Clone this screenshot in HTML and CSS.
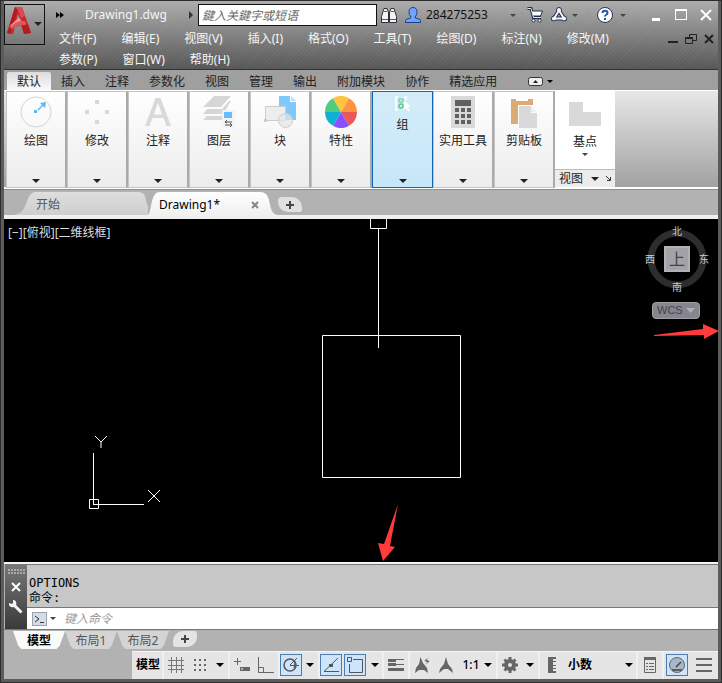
FILE: index.html
```html
<!DOCTYPE html>
<html lang="zh-CN">
<head>
    <meta charset="UTF-8">
    <meta name="viewport" content="width=device-width, initial-scale=1.0">
    <title>Drawing1.dwg</title>
    <link rel="stylesheet" href="styles.css">
</head>
<body>
    <!-- Title bar and menus -->
    <header class="header">
        <button class="logo" aria-label="应用程序菜单">
            <svg width="24" height="28" viewBox="0 0 24 28">
                <path fill-rule="evenodd" d="M8 0h7l9 26-7 1-3-9-6 2-2 7-6-1zM9 15l4-2-2-6z" fill="#c9252c"/>
                <path d="M8 0h3L6 19l-3 8-3-1z" fill="#b3191f"/>
                <path d="M8 0h7l3 9-4 2-3-8z" fill="#e04a4e"/>
                <path d="M3 18c5-4 9-5 15-4l2 5c-6-2-11-1-15 4z" fill="#e0575a"/>
                <path d="M0 26c3-7 8-11 14-12l-1-3C8 13 4 17 0 26z" fill="#f29a98"/>
                <path d="m17 27 7-1-3-9-6 2z" fill="#b41c22"/>
            </svg>
            <span class="caret"></span>
        </button>
        <div class="header-main">
            <div class="title-bar">
                <button class="more" aria-label="更多">
                    <svg width="8" height="6" viewBox="0 0 8 6"><path d="M0 0l4 3-4 3zM4 0l4 3-4 3z"/></svg>
                </button>
                <h1 class="doc-title">Drawing1.dwg</h1>
                <svg class="title-arrow" width="4" height="8" viewBox="0 0 4 8"><path d="M0 0l4 4-4 4z" fill="#333"/></svg>
                <input class="search" type="text" placeholder="鍵入关鍵字或短语" aria-label="搜索">
                <div class="account">
                    <button aria-label="查找">
                        <svg width="16" height="16" viewBox="0 0 16 16">
                            <path d="M3 1.500h3l1.500 4v10h-7v-6zM10 1.500h3l2.500 8v6h-7v-10z" fill="#f4f4f4" stroke="#2b2f36"/>
                            <path d="M7 5h2v4H7z" fill="#2b2f36"/>
                            <path d="M1 12.500h6M9 12.500h6M3 4.500h3M10 4.500h3" stroke="#555b66"/>
                        </svg>
                    </button>
                    <button class="user">
                        <svg width="16" height="16" viewBox="0 0 16 16" fill="#6ea4ff" stroke="#1f3f7c">
                            <path d="M.5 15.500v-2c0-1.500 3-1.500 5-2.500l.5-1C4.500 8.500 4 6.500 4 4.500 4 2 5.500.5 8 .5s4 1.500 4 4c0 2-.5 4-2 5.500l.5 1c2 1 5 1 5 2.500v2z"/>
                        </svg>
                        <span>284275253</span>
                    </button>
                    <span class="caret small"></span>
                </div>
                <div class="services">
                    <button aria-label="商店">
                        <svg width="16" height="16" viewBox="0 0 16 16">
                            <path d="M.5 1.500H4L6.500 10.500H14" fill="none" stroke="#23304c" stroke-width="3"/>
                            <path d="M4 4h11.500L13.500 9H6z" fill="#fff" stroke="#23304c"/>
                            <path d="M.5 1.500H4L6.500 10.500H14" fill="none" stroke="#dfe6f3"/>
                            <circle cx="6.500" cy="13.500" r="1.500" fill="#fff" stroke="#23304c"/>
                            <circle cx="12.500" cy="13.500" r="1.500" fill="#fff" stroke="#23304c"/>
                        </svg>
                    </button>
                    <button class="drop" aria-label="应用">
                        <svg width="16" height="16" viewBox="0 0 16 16">
                            <path d="M8 3.500 3 11.500h10z" fill="none" stroke="#23304c" stroke-width="4"/>
                            <g fill="#f2f5fa" stroke="#23304c">
                                <circle cx="8" cy="3" r="2.500"/>
                                <circle cx="3" cy="11.500" r="2.500"/>
                                <circle cx="13" cy="11.500" r="2.500"/>
                            </g>
                            <path d="M8 3.500 3 11.500h10z" fill="none" stroke="#f2f5fa" stroke-width="2"/>
                        </svg>
                        <span class="caret small"></span>
                    </button>
                    <button class="help drop" aria-label="帮助">
                        <svg width="16" height="16" viewBox="0 0 16 16">
                            <circle cx="8" cy="8" r="7.500" fill="#fff" stroke="#2c3444"/>
                            <path d="M5.500 6C5.500 3 10.500 3 10.500 6 10.500 8 8 7.500 8 9.500M8 11v2" fill="none" stroke="#1d56b5" stroke-width="2"/>
                        </svg>
                        <span class="caret small"></span>
                    </button>
                </div>
                <div class="window-buttons">
                    <button aria-label="最小化"><svg width="12" height="12"><path d="M2 10.500h8" stroke="#fff" stroke-width="3"/></svg></button>
                    <button aria-label="最大化"><svg width="12" height="12"><path d="M.5 0v11M11.500 0v11M0 10.500h12" stroke="#fff" fill="none"/><path d="M0 1h12" stroke="#fff" stroke-width="2"/></svg></button>
                    <button aria-label="关闭"><svg width="12" height="12"><path d="M1 1l10 10M11 1L1 11" stroke="#fff" stroke-width="2"/></svg></button>
                </div>
            </div>
            <div class="menu-row">
                <nav class="menu">
                    <a href="#">文件(F)</a>
                    <a href="#">编辑(E)</a>
                    <a href="#">视图(V)</a>
                    <a href="#">插入(I)</a>
                    <a href="#">格式(O)</a>
                    <a href="#">工具(T)</a>
                    <a href="#">绘图(D)</a>
                    <a href="#">标注(N)</a>
                    <a href="#">修改(M)</a>
                    <a href="#">参数(P)</a>
                    <a href="#">窗口(W)</a>
                    <a href="#">帮助(H)</a>
                </nav>
                <div class="mdi-buttons">
                    <button aria-label="最小化图形"><svg width="10" height="10"><path d="M0 8h10" stroke="#222" stroke-width="2"/></svg></button>
                    <button aria-label="还原图形"><svg width="12" height="10"><path d="M.5 3.500h7v6h-7zM4.500 3V.5h7v6H8M.5 4.500h7" stroke="#222" fill="none"/></svg></button>
                    <button aria-label="关闭图形"><svg width="10" height="10"><path d="M1 1l8 8M9 1L1 9" stroke="#222" stroke-width="2"/></svg></button>
                </div>
            </div>
        </div>
    </header>

    <!-- Ribbon -->
    <nav class="ribbon-tabs">
        <button class="active">默认</button>
        <button>插入</button>
        <button>注释</button>
        <button>参数化</button>
        <button>视图</button>
        <button>管理</button>
        <button>输出</button>
        <button>附加模块</button>
        <button>协作</button>
        <button>精选应用</button>
        <button class="ribbon-toggle" aria-label="最小化功能区">
            <svg width="15" height="9" viewBox="0 0 15 9"><rect x=".5" y=".5" width="14" height="8" rx="2" fill="#eee" stroke="#333"/><path d="M5 6h5L7.500 3z" fill="#222"/></svg>
            <span class="caret small"></span>
        </button>
    </nav>

    <section class="ribbon">
        <button class="panel">
            <svg width="32" height="32" viewBox="0 0 32 32">
                <circle cx="16" cy="16" r="15" fill="none" stroke="#d4d4d4"/>
                <path d="M18 14l5-5" stroke="#5bb8f5" stroke-width="1.500"/>
                <path d="M14 14h3v3h-3zM20 7l6-1-1 6z" fill="#5bb8f5"/>
            </svg>
            <span>绘图</span><span class="caret"></span>
        </button>
        <button class="panel">
            <svg width="32" height="32" viewBox="0 0 32 32"><path d="M14 4h4v4h-4zM4 14h4v4H4zM24 14h4v4h-4zM14 24h4v4h-4z" fill="#d9d9d9"/></svg>
            <span>修改</span><span class="caret"></span>
        </button>
        <button class="panel">
            <svg width="32" height="32" viewBox="0 0 32 32"><path fill-rule="evenodd" d="M3 30 13.500 2h5L29 30h-4.500l-3-8h-11l-3 8zM12 18.500h8L16 7z" fill="#d9d9d9"/></svg>
            <span>注释</span><span class="caret"></span>
        </button>
        <button class="panel">
            <svg width="32" height="32" viewBox="0 0 32 32">
                <path d="M11 0h17L18 11H0zM4 13h15l7-8h2l-8 13H0zM4 20h15v4H0z" fill="#d6d6d6"/>
                <path d="M19 14h13v18H19z" fill="#f3f3f3"/>
                <path d="M21 16h8v6h-8z" fill="#66bdfb"/>
                <path d="M22 26h7M22 29h7M24 24l-2 2 2 1M27 27l2 2-2 2" fill="none" stroke="#555"/>
            </svg>
            <span>图层</span><span class="caret"></span>
        </button>
        <button class="panel">
            <svg width="32" height="32" viewBox="0 0 32 32">
                <path d="M15 0h11v6h6v18H15z" fill="#81c8fb"/>
                <path d="M27 0l5 5h-5z" fill="#b5dffc"/>
                <path d="M1.500 10.500h20v14h-20z" fill="#ededed" stroke="#ccc"/>
                <circle cx="21.500" cy="24.500" r="7" fill="#e5e5e5" fill-opacity=".7" stroke="#ccc"/>
                <path d="M0 23h3v3H0z" fill="#ccc"/>
            </svg>
            <span>块</span><span class="caret"></span>
        </button>
        <button class="panel">
            <svg width="32" height="32" viewBox="0 0 32 32">
                <path d="M16 16 8 2.140A16 16 0 0 1 24 2.140z" fill="#ffc440"/>
                <path d="M16 16 24 2.140A16 16 0 0 1 32 16z" fill="#ff9440"/>
                <path d="M16 16H32A16 16 0 0 1 24 29.860z" fill="#e85858"/>
                <path d="M16 16 24 29.860A16 16 0 0 1 8 29.860z" fill="#8850ff"/>
                <path d="M16 16 8 29.860A16 16 0 0 1 0 16z" fill="#10b0d0"/>
                <path d="M16 16H0A16 16 0 0 1 8 2.140z" fill="#50cc80"/>
            </svg>
            <span>特性</span><span class="caret"></span>
        </button>
        <button class="panel selected">
            <svg width="16" height="16" viewBox="0 0 16 16">
                <path d="M3 1H1v13h2M9 1h2v3" fill="none" stroke="#fff" stroke-width="1.500"/>
                <path d="M4 3h4v3H4z" fill="none" stroke="#57cf87"/>
                <circle cx="6" cy="10" r="2" fill="none" stroke="#57cf87" stroke-width="1.500"/>
                <path d="M9 4l7 7h-3l2 4h-2l-2-3-2 2z" fill="#fff"/>
            </svg>
            <span>组</span><span class="caret"></span>
        </button>
        <button class="panel">
            <svg width="32" height="32" viewBox="0 0 32 32">
                <path d="M4 0h24v32H4z" fill="#d9d9d9"/>
                <path d="M8 4h16v6H8zM8 12h4v4H8zM14 12h4v4h-4zM20 12h4v4h-4zM8 18h4v4H8zM14 18h4v4h-4zM20 18h4v4h-4zM8 24h4v4H8zM14 24h4v4h-4zM20 24h4v4h-4z" fill="#606060"/>
            </svg>
            <span>实用工具</span><span class="caret"></span>
        </button>
        <button class="panel">
            <svg width="32" height="32" viewBox="0 0 32 32">
                <path d="M3 3h5v2h12V3h5v6H10v19H3z" fill="#d9ac77"/>
                <path d="M11 10h12v7h6v15H11z" fill="#d9d9d9"/>
                <path d="M23 10l6 6h-6z" fill="#efefef"/>
            </svg>
            <span>剪贴板</span><span class="caret"></span>
        </button>
        <div class="view-panel">
            <button class="base">
                <svg width="32" height="24" viewBox="0 0 32 24"><path d="M0 0h14v10h18v14H0z" fill="#d9d9d9"/></svg>
                <span>基点</span><span class="caret small"></span>
            </button>
            <button class="view-title">
                <span>视图</span><span class="caret"></span>
                <svg width="5" height="5" viewBox="0 0 5 5"><path d="M0 0l4 4M4.500 1v3.500H1" fill="none" stroke="#333"/></svg>
            </button>
        </div>
    </section>

    <!-- Drawing tabs -->
    <nav class="doc-tabs">
        <button class="doc-tab start">开始</button>
        <button class="doc-tab current">
            <span>Drawing1*</span>
            <svg width="8" height="8"><path d="M1 1l6 6M7 1L1 7" stroke="#888" stroke-width="2"/></svg>
        </button>
        <button class="new-tab" aria-label="新图形"><svg width="8" height="8"><path d="M4 0v8M0 4h8" stroke="#444" stroke-width="2"/></svg></button>
    </nav>

    <!-- Model space -->
    <main class="canvas">
        <div class="view-label">[−][俯视][二维线框]</div>

        <svg class="shapes" width="142" height="262" viewBox="0 0 142 262" fill="none" stroke="#fff">
            <path d="M48.500 0v9.500h16V0M56.500 10v119M.5 116.500h138v142H.5z"/>
        </svg>

        <svg class="ucs" width="76" height="76" viewBox="0 0 76 76" fill="none" stroke="#fff">
            <path d="M5.500 70V18M5 69.500h51M1.500 64.500h9v9h-9zM7 1l6 6 6-6M13 7v6M60 55l12 12M72 55L60 67"/>
        </svg>

        <div class="compass">
            <svg class="ring" width="60" height="60"><circle cx="30" cy="30" r="26" fill="none" stroke="#2d2d2d" stroke-width="7"/></svg>
            <span class="north">北</span>
            <span class="west">西</span>
            <button class="top-face">上</button>
            <span class="east">东</span>
            <span class="south">南</span>
        </div>
        <button class="wcs">WCS <svg width="9" height="5"><path d="M0 0h9L4.500 5z" fill="#aeb0bb"/></svg></button>

        <svg class="arrow-right" width="65" height="16"><path d="M0 12 49 6V1l16 7-15 8v-4L0 13z" fill="#ff3b3b"/></svg>
        <svg class="arrow-down" width="22" height="58"><path d="M20 0 6 40l-6-1 5 18 12-14-5-1z" fill="#ff3b3b"/></svg>
    </main>

    <!-- Command line -->
    <section class="command">
        <div class="command-grip">
            <svg width="17" height="5"><path d="M0 1h17M0 4h17" stroke="#aaa" stroke-width="2" stroke-dasharray="2 1"/></svg>
            <button aria-label="关闭命令行"><svg width="10" height="10"><path d="M1 1l8 8M9 1L1 9" stroke="#fff" stroke-width="2"/></svg></button>
            <button aria-label="自定义">
                <svg width="14" height="14" viewBox="0 0 14 14"><path d="M4.500 4.500l8 8" stroke="#f4f4f4" stroke-width="3"/><path d="M4 0v3L3 4 0 3c-.5 3 2 5 5 4l2-2C8 3 7 0 4 0z" fill="#f4f4f4"/></svg>
            </button>
        </div>
        <div class="command-body">
            <div class="command-log">
                <p>OPTIONS</p>
                <p>命令:</p>
            </div>
            <div class="command-line">
                <button class="prompt" aria-label="最近使用的命令">
                    <svg width="15" height="14" viewBox="0 0 15 14"><rect x=".5" y=".5" width="14" height="13" fill="#d6dce6" stroke="#9aa3b2"/><path d="M3 4l4 3-4 3M8 10.500h4" fill="none" stroke="#333"/></svg>
                    <span class="caret small"></span>
                </button>
                <input type="text" placeholder="键入命令" aria-label="命令">
            </div>
        </div>
    </section>

    <nav class="layout-tabs">
        <button class="active">模型</button>
        <button>布局1</button>
        <button>布局2</button>
        <button class="add-layout" aria-label="新建布局"><svg width="8" height="8"><path d="M4 0v8M0 4h8" stroke="#444" stroke-width="2"/></svg></button>
    </nav>

    <!-- Status bar -->
    <footer class="status">
        <div class="group">
            <button class="model">模型</button>
        </div>
        <div class="group">
            <button aria-label="栅格"><svg width="16" height="16"><path d="M3.500 0v16M8.500 0v16M13.500 0v16M0 3.500h16M0 8.500h16M0 12.500h16" stroke="#777"/></svg></button>
            <button aria-label="捕捉"><svg width="14" height="14"><path d="M1 2h12M1 7h12M1 12h12" stroke="#666" stroke-width="2" stroke-dasharray="2 3"/></svg></button>
            <button class="drop-caret" aria-label="捕捉设置"><span class="caret"></span></button>
        </div>
        <div class="group">
            <button aria-label="动态输入"><svg width="16" height="14"><path d="M3.500 0v7M0 3.500h7" stroke="#666"/><path d="M6 9h10v4H6z" fill="#666"/><path d="M8 10v2" stroke="#fff"/></svg></button>
            <button aria-label="正交"><svg width="16" height="16"><path d="M.5 0v15.500H16M.5 10.500h5v5" stroke="#666" fill="none"/></svg></button>
        </div>
        <div class="group">
            <button class="on" aria-label="极轴追踪"><svg width="16" height="16"><circle cx="7" cy="8" r="6" stroke="#555" fill="none" stroke-width="1.500"/><path d="M7 8.500h9M7 8l7-7M10 3c2 2 2 5 1 8" stroke="#555" fill="none"/></svg></button>
            <button class="drop-caret" aria-label="极轴设置"><span class="caret"></span></button>
        </div>
        <div class="group spaced">
            <button class="on" aria-label="对象捕捉追踪"><svg width="16" height="16"><path d="M15 1 1 14.500h15" stroke="#555" fill="none"/><path d="M6 7h4v3H6z" fill="#555"/></svg></button>
            <button class="on" aria-label="对象捕捉"><svg width="16" height="16"><path d="M6 2.500h9.500v13H2.500V7M.5.5h4v4h-4z" stroke="#555" fill="none"/></svg></button>
            <button class="drop-caret" aria-label="捕捉模式"><span class="caret"></span></button>
        </div>
        <div class="group">
            <button aria-label="线宽"><svg width="16" height="14"><path d="M0 1.500h16M8 6.500h8" stroke="#666"/><path d="M0 6.500h8M8 11.500h8" stroke="#666" stroke-width="3"/><path d="M0 2.500h8M0 11.500h8" stroke="#666" stroke-width="3"/></svg></button>
        </div>
        <div class="group">
            <button aria-label="注释可见性"><svg width="16" height="16"><path d="M6.500 0 9 6l4 5 1 5-4-3H5l-4 3 1-5 3-4z" fill="#666"/><path d="M15 0l-5 4 3 1-2 3 5-4-3-1z" fill="#555" stroke="#e5e5e5" stroke-width=".5"/></svg></button>
            <button aria-label="自动缩放"><svg width="14" height="16"><path d="M7 0l2 7 4 5 1 4-5-4H5l-5 4 1-4 4-5z" fill="#666"/></svg></button>
            <button class="scale"><span>1:1</span><span class="caret"></span></button>
        </div>
        <div class="group">
            <button aria-label="切换工作空间"><svg width="16" height="16" viewBox="0 0 16 16"><circle cx="8" cy="8" r="4" fill="none" stroke="#666" stroke-width="4"/><path d="M8 0v3M8 13v3M0 8h3M13 8h3M2.500 2.500l2 2M11.500 11.500l2 2M13.500 2.500l-2 2M2.500 13.500l2-2" stroke="#666" stroke-width="3"/></svg></button>
            <button class="drop-caret" aria-label="工作空间"><span class="caret"></span></button>
        </div>
        <div class="group units">
            <svg width="8" height="16"><path d="M0 0h8v2H5v2h3v1H5v3h3v1H5v2h3v1H5v2h3v2H0z" fill="#666"/></svg>
            <select aria-label="单位"><option>小数</option></select>
            <span class="caret"></span>
        </div>
        <div class="group">
            <button aria-label="快捷特性"><svg width="12" height="16"><path d="M.5.5h11v15H.5z" fill="none" stroke="#666"/><path d="M0 1.500h12" stroke="#666" stroke-width="3"/><path d="M2 6.500h2M5 6.500h5M2 9.500h2M5 9.500h5M2 12.500h2M5 12.500h5" stroke="#666"/></svg></button>
        </div>
        <div class="group end">
            <button class="on" aria-label="硬件加速"><svg width="16" height="16"><circle cx="8" cy="8" r="7.500" fill="#a5b7c8" stroke="#666"/><path d="M7 10l5-5M3 13h10" stroke="#444" stroke-width="1.500"/></svg></button>
            <button aria-label="自定义"><svg width="16" height="14"><path d="M0 1h16M0 7h16M0 13h16" stroke="#666" stroke-width="2"/></svg></button>
        </div>
    </footer>
</body>
</html>
```
FILE: styles.css
```css
* {
    margin: 0;
    padding: 0;
    box-sizing: border-box;
}

body {
    font-family: "Noto Sans", "Noto Sans CJK SC", sans-serif;
    font-size: 12px;
    line-height: 16px;
    color: #222;
    background: #b2b2b2;
    height: 100vh;
    display: flex;
    flex-direction: column;
    border: solid #5c5c5c;
    border-width: 0 4px 4px;
    outline: 1px solid #2c2c2c;
    outline-offset: -1px;
    overflow: hidden;
}

button,
input,
select {
    font: inherit;
    color: inherit;
    background: none;
    border: 0;
    white-space: nowrap;
}

a {
    color: inherit;
    text-decoration: none;
}

svg {
    display: block;
    flex: none;
}

.caret {
    flex: none;
    border: 4px solid transparent;
    border-top-color: #222;
    border-bottom: 0;
}

.caret.small {
    border-width: 3px 3px 0;
    border-top-color: #444;
}

/* Header */
.header {
    display: flex;
    flex: none;
    height: 70px;
    margin: 0 -4px;
    padding: 3px 4px 0;
    border-top: 1px solid #2c2c2c;
    border-bottom: 1px solid #333;
    background: repeating-linear-gradient(135deg, rgba(255, 255, 255, 0.04) 0 1px, transparent 1px 3px),
                linear-gradient(#acacac, #565656);
}

.logo {
    display: flex;
    align-items: flex-start;
    justify-content: center;
    gap: 3px;
    width: 41px;
    height: 41px;
    padding-top: 2px;
    border: 1px solid #111;
    background: linear-gradient(#aaa, #777);
}

.logo .caret {
    margin-top: 15px;
}

.header-main {
    flex: 1;
    padding-left: 11px;
}

.title-bar {
    display: flex;
    align-items: center;
    height: 22px;
}

.doc-title {
    width: 104px;
    margin-left: 21px;
    font: 12px/16px "Noto Sans", sans-serif;
    color: #f4f4f4;
}

.search {
    flex: 1;
    width: 100px;
    height: 22px;
    margin-left: 5px;
    padding: 0 3px;
    border: 1px solid #111;
    background: #fff;
    font-style: italic;
}

.search::placeholder {
    color: #666;
}

.account,
.services,
.user,
.drop {
    display: flex;
    align-items: center;
}

.account {
    gap: 8px;
    margin-left: 4px;
    width: 146px;
}

.account .caret {
    margin-left: 14px;
}

.user {
    gap: 5px;
    font-size: 12px;
    color: #111;
}

.services {
    gap: 8px;
}

.drop {
    gap: 5px;
}

.help {
    margin-left: 1px;
    padding-left: 9px;
    border-left: 1px solid #999;
}

.help svg {
    margin-right: 2px;
}

.window-buttons,
.mdi-buttons {
    display: flex;
    align-items: center;
}

.window-buttons {
    gap: 13px;
    margin: 0 6px 0 24px;
}

.menu-row {
    display: flex;
    align-items: flex-start;
    justify-content: space-between;
    padding: 5px 4px 0 3px;
}

.menu {
    display: flex;
    flex-wrap: wrap;
    gap: 5px 25px;
    max-width: 580px;
    color: #f6f6f6;
}

.mdi-buttons {
    gap: 7px;
    padding-top: 3px;
}

/* Ribbon */
.ribbon-tabs {
    display: flex;
    align-items: flex-end;
    flex: none;
    height: 20px;
    padding-left: 3px;
    background: #9f9f9f;
}

.ribbon-tabs button {
    height: 18px;
    padding: 1px 10px 0;
}

.ribbon-tabs .active {
    background: linear-gradient(#dcdcdc, #fafafa);
    border-radius: 2px 2px 0 0;
}

.ribbon-tabs .ribbon-toggle {
    display: flex;
    align-items: center;
    gap: 4px;
    margin-left: 11px;
    padding-top: 0;
}

.ribbon-toggle .caret {
    border-top-color: #000;
}

.ribbon {
    display: flex;
    flex: none;
    height: 100px;
    padding: 1px 1px 2px 2px;
    border-bottom: 1px solid #8e8e8e;
    background: linear-gradient(#e8e8e8, #a0a0a0);
    box-shadow: inset 0 1px #fff, inset 0 -2px #fff;
}

.panel {
    display: flex;
    flex-direction: column;
    align-items: center;
    width: 61px;
    height: 97px;
    padding: 4px 0 4px;
    gap: 5px;
    border: 1px solid #c4c4c4;
    border-right: 2px solid #aaa;
    background: linear-gradient(#fff, #ececec);
}

.panel .caret {
    margin-top: auto;
}

.panel.selected {
    border: 1px solid #1265b4;
    background: linear-gradient(#d4ecfa, #c6e7f8);
}

.view-panel {
    display: flex;
    flex-direction: column;
    width: 60px;
    background: #fff;
}

.base {
    display: flex;
    flex: 1;
    flex-direction: column;
    align-items: center;
    padding-top: 11px;
}

.base span:not(.caret) {
    margin: 8px 0 3px;
}

.view-title {
    display: flex;
    align-items: center;
    justify-content: space-between;
    height: 18px;
    padding: 0 4px;
    border-top: 1px solid #bbb;
    background: #ececec;
}

/* Drawing tabs */
.doc-tabs {
    display: flex;
    align-items: flex-end;
    flex: none;
    height: 29px;
    padding-left: 8px;
    border-bottom: 4px solid #f0f0f0;
    background: #b2b2b2;
}

.doc-tab {
    display: flex;
    align-items: center;
    height: 23px;
    padding-top: 2px;
}

.doc-tab.start {
    width: 136px;
    padding-left: 24px;
    color: #555;
    background: linear-gradient(#dedede, #cecece);
    clip-path: path("M0 23C18 23 12 0 24 0H124C136 0 132 6 136 14V23z");
}

.doc-tab.current {
    justify-content: space-between;
    width: 130px;
    padding-left: 11px;
    padding-right: 19px;
    color: #000;
    background: linear-gradient(#fff, #f0f0f0);
    clip-path: path("M0 23C4 20 2 0 12 0H112C126 0 118 22 130 23z");
}

.new-tab {
    display: grid;
    place-items: center;
    width: 24px;
    height: 15px;
    margin-bottom: 3px;
    border-radius: 4px 10px 2px 10px;
    background: #e0e0e0;
}

/* Model space */
.canvas {
    position: relative;
    flex: 1;
    min-height: 0;
    background: #000;
    color: #ddd;
}

.view-label {
    padding: 6px 4px;
}

.shapes {
    position: absolute;
    left: 318px;
    top: 0;
}

.ucs {
    position: absolute;
    left: 84px;
    bottom: 51px;
}

.compass {
    position: absolute;
    top: 6px;
    right: 9px;
    display: grid;
    grid-template: 20px 28px 20px / 18px 28px 18px;
    place-items: center;
    font-size: 10px;
    line-height: 12px;
}

.ring {
    position: absolute;
    left: 2px;
    top: 4px;
}

.north,
.south,
.east,
.west {
    position: relative;
    color: #ccc;
}

.north,
.south {
    grid-column: 2;
}

.north {
    align-self: start;
}

.south {
    align-self: end;
}

.west {
    grid-column: 1;
    justify-self: start;
}

.east {
    justify-self: end;
}

.top-face {
    position: relative;
    width: 26px;
    height: 26px;
    border: 2px solid #b2b2b2;
    background: #a1a3a8;
    color: #444;
    font-size: 16px;
    line-height: 20px;
}

.wcs {
    position: absolute;
    top: 83px;
    right: 18px;
    display: flex;
    align-items: center;
    justify-content: space-between;
    width: 48px;
    height: 17px;
    padding: 0 4px;
    border: 1px solid #a0a0a0;
    border-radius: 4px;
    background: #85868f;
    color: #444;
    font: 11px/15px "Liberation Sans", sans-serif;
}

.arrow-right {
    position: absolute;
    top: 104px;
    right: -1px;
}

.arrow-down {
    position: absolute;
    left: 374px;
    bottom: 0;
}

/* Command line */
.command {
    display: flex;
    flex: none;
    height: 68px;
    padding-left: 1px;
    border-top: 2px solid #f4f4f4;
    border-bottom: 1px solid #777;
}

.command-grip {
    display: flex;
    flex-direction: column;
    align-items: center;
    gap: 8px;
    width: 22px;
    padding-top: 5px;
    background: linear-gradient(#777, #3a3a3a);
}

.command-body {
    display: flex;
    flex: 1;
    flex-direction: column;
}

.command-log {
    flex: 1;
    padding: 11px 2px 0;
    border-top: 1px solid #777;
    border-bottom: 1px solid #777;
    background: #c7c7c7;
    color: #000;
    font: 12px/15px "DejaVu Sans Mono", "Noto Sans CJK SC", monospace;
}

.command-line {
    display: flex;
    height: 21px;
    background: #fff;
}

.prompt {
    display: flex;
    align-items: center;
    gap: 3px;
    padding-left: 5px;
}

.command-line input {
    flex: 1;
    padding-left: 8px;
}

.command-line input::placeholder {
    color: #999;
    font-style: italic;
}

/* Layout tabs */
.layout-tabs {
    display: flex;
    flex: none;
    height: 21px;
    padding: 1px 0 2px 9px;
    background: #b2b2b2;
}

.layout-tabs button {
    width: 52px;
    padding-top: 2px;
    background: #d4d4d4;
    color: #555;
    clip-path: polygon(0 0, 100% 0, 90% 80%, 84% 100%, 16% 100%, 10% 80%);
}

.layout-tabs .active {
    background: #fafafa;
    color: #000;
    font-weight: bold;
}

.layout-tabs .add-layout {
    display: grid;
    place-items: center;
    width: 24px;
    margin: 0 0 2px 4px;
    padding: 0;
    border-radius: 10px 3px 10px 3px;
    background: #e4e4e4;
    clip-path: none;
}

/* Status bar */
.status {
    display: flex;
    flex: none;
    align-self: flex-end;
    width: 586px;
    max-width: 100%;
    height: 28px;
    border-top: 1px solid #f4f4f4;
    background: #e5e5e5;
}

.group {
    display: flex;
    align-items: center;
    padding-bottom: 1px;
    border-right: 2px solid #f0f0f0;
}

.group button {
    display: flex;
    align-items: center;
    justify-content: center;
    width: 24px;
    height: 22px;
}

.group .model {
    width: 30px;
    padding-left: 2px;
    font-weight: bold;
    color: #000;
}

.group .drop-caret {
    width: 16px;
}

.drop-caret .caret,
.scale .caret,
.units .caret {
    border-top-color: #000;
}

.group .on {
    width: 22px;
    border: 1px solid #4a7cb0;
    background: #cce4fc;
}

.spaced {
    gap: 2px;
}

.spaced .drop-caret {
    width: 14px;
}

.group .scale {
    gap: 4px;
    width: 38px;
    color: #000;
    font-weight: 500;
}

.units {
    flex: 1;
    gap: 12px;
    padding: 0 3px 1px 8px;
}

.units select {
    flex: 1;
    width: 40px;
    appearance: none;
    color: #000;
    font-weight: bold;
}

.end {
    gap: 4px;
    padding: 0 2px 1px;
    border-right: 0;
}
```
